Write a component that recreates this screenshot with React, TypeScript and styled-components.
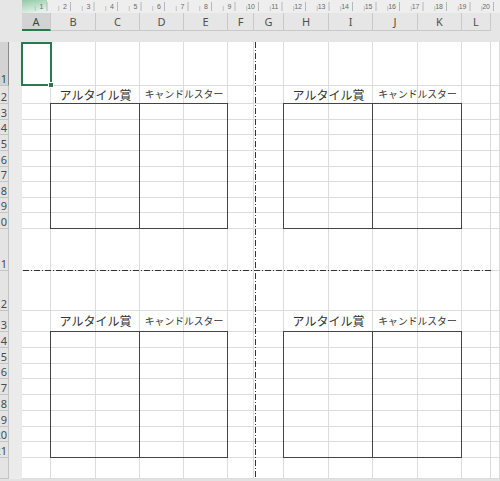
import React from "react";
import styled, { createGlobalStyle } from "styled-components";

const GlobalStyle = createGlobalStyle`
  html, body {
    margin: 0;
    padding: 0;
    overflow: hidden;
    background: #e6e6e6;
  }
`;

const COLS = [29, 45, 44, 44, 44, 26, 30, 45, 44, 45, 44, 29];
const LETTERS = "ABCDEFGHIJKL".split("");
const ROWS = [
  44, 18, ...Array(8).fill(15.625), 42, 40, 21, ...Array(8).fill(15.75), 21,
];

const GREEN = "#2b7a4f";
const GRID = "#dcdcdc";
const FONT = `"Noto Sans", "Noto Sans CJK JP", sans-serif`;

// grid offsets: 3 leading rows (ruler, headers, gap), 2 leading cols (row headers, strip)
const R0 = 3;
const C0 = 2;

const Window = styled.div`
  width: 500px;
  height: 481px;
  display: grid;
  grid-template-columns: 9px 13px ${COLS.map((w) => `${w}px`).join(" ")} 1fr;
  grid-template-rows: 13px 18px 11px ${ROWS.map((h) => `${h}px`).join(" ")} 1fr;
  background: #e6e6e6;
  font-family: ${FONT};
  overflow: hidden;
`;

const RulerWrap = styled.div`
  grid-row: 1;
  grid-column: 3 / -1;
  background: #eeeeee;
  overflow: hidden;

  svg {
    display: block;
  }
`;

const ColHead = styled.div<{ $c: number; $sel?: boolean }>`
  grid-row: 2;
  grid-column: ${(p) => p.$c + C0};
  display: flex;
  align-items: center;
  justify-content: center;
  font-size: 11px;
  color: ${(p) => (p.$sel ? "#2f4f3c" : "#505050")};
  background: ${(p) => (p.$sel ? "#d3d3d3" : "#e6e6e6")};
  border-right: 1px solid #c9c9c9;
  border-bottom: ${(p) => (p.$sel ? `2px solid ${GREEN}` : "1px solid #c9c9c9")};
  box-sizing: border-box;
`;

const RowHead = styled.div<{ $r: number; $sel?: boolean }>`
  grid-row: ${(p) => p.$r + R0};
  grid-column: 1;
  display: flex;
  align-items: flex-end;
  justify-content: flex-end;
  padding-right: 1px;
  font-size: 11px;
  line-height: 13px;
  white-space: nowrap;
  color: ${(p) => (p.$sel ? "#2f4f3c" : "#4a4a4a")};
  background: ${(p) => (p.$sel ? "#d3d3d3" : "#e4e4e4")};
  border-right: 1px solid ${(p) => (p.$sel ? "#8a8a8a" : "#c4c4c4")};
  border-bottom: 1px solid #c4c4c4;
  box-sizing: border-box;
`;

const Strip = styled.div`
  grid-row: ${R0 + 1} / -1;
  grid-column: 2;
  background: #ebebeb;
`;

const Cell = styled.div<{ $r: number; $c: number }>`
  grid-row: ${(p) => p.$r + R0};
  grid-column: ${(p) => p.$c + C0};
  background: #ffffff;
  border-right: 1px solid ${GRID};
  border-bottom: 1px solid ${GRID};
  box-sizing: border-box;
`;

const BottomBar = styled.div`
  grid-row: -2;
  grid-column: 1 / -1;
  background: #e2e2e2;
`;

const Box = styled.div<{ $r: number; $c: number }>`
  grid-row: ${(p) => p.$r + R0} / span 8;
  grid-column: ${(p) => p.$c + C0} / span 2;
  margin: -1px 0 0 -1px;
  border: 1px solid #444444;
  box-sizing: border-box;
`;

const Label = styled.div<{ $r: number; $c: number; $small?: boolean }>`
  grid-row: ${(p) => p.$r + R0};
  grid-column: ${(p) => p.$c + C0} / span 2;
  display: flex;
  align-items: center;
  justify-content: center;
  font-family: "Noto Sans CJK JP", sans-serif;
  font-size: ${(p) => (p.$small ? "9.8px" : "12px")};
  color: #333333;
  white-space: nowrap;
  padding-bottom: 2px;
`;

const HDash = styled.div<{ $r: number }>`
  grid-row: ${(p) => p.$r + R0};
  grid-column: ${1 + C0} / ${13 + C0};
  align-self: end;
  height: 1px;
  margin-left: 1px;
  background: repeating-linear-gradient(
    to right,
    #333 0 6px,
    transparent 6px 8px,
    #333 8px 9px,
    transparent 9px 11px
  );
`;

const VDash = styled.div<{ $c: number }>`
  grid-row: ${1 + R0} / -2;
  grid-column: ${(p) => p.$c + C0};
  justify-self: start;
  width: 1px;
  margin-left: 1px;
  background: repeating-linear-gradient(
    to bottom,
    #333 0 6px,
    transparent 6px 8px,
    #333 8px 9px,
    transparent 9px 11px
  );
`;

const Selection = styled.div`
  grid-row: ${1 + R0};
  grid-column: ${1 + C0};
  margin: 0 -1px 0 -1px;
  border: 2px solid ${GREEN};
  box-sizing: border-box;
  position: relative;

  &::after {
    content: "";
    position: absolute;
    right: -4px;
    bottom: -4px;
    width: 4px;
    height: 4px;
    background: ${GREEN};
    border: 1px solid #ffffff;
  }
`;

const Ruler = () => {
  const step = 23.5;
  const nums = Array.from({ length: 20 }, (_, i) => i + 1);
  return (
    <svg width={478} height={13} viewBox="0 0 478 13">
      <defs>
        <linearGradient id="sel" x1="0" y1="0" x2="0.4" y2="1">
          <stop offset="0" stopColor="#8fc9a4" />
          <stop offset="1" stopColor="#e3f1e8" />
        </linearGradient>
      </defs>
      <rect x={0} y={0} width={25} height={13} fill="url(#sel)" />
      {nums.map((n) => {
        const x = n * step;
        return (
          <g key={n}>
            <text
              x={x - 2}
              y={9}
              fontSize={7}
              fill="#6a6a6a"
              textAnchor="end"
              fontFamily="Liberation Sans, sans-serif"
            >
              {n}
            </text>
            <line x1={x + 1.5} y1={2} x2={x + 1.5} y2={11} stroke="#a8a8a8" strokeWidth={0.8} />
            <line
              x1={x - step / 2 + 1.5}
              y1={6}
              x2={x - step / 2 + 1.5}
              y2={11}
              stroke="#b8b8b8"
              strokeWidth={0.8}
            />
          </g>
        );
      })}
    </svg>
  );
};

const groups = [
  { r: 2, c: 2 },
  { r: 2, c: 8 },
  { r: 13, c: 2 },
  { r: 13, c: 8 },
];

export default function App() {
  const rowNums = ROWS.map((_, i) => i + 1);
  const colNums = Array.from({ length: 13 }, (_, i) => i + 1);

  return (
    <>
      <GlobalStyle />
      <Window>
        <RulerWrap>
          <Ruler />
        </RulerWrap>

        {LETTERS.map((l, i) => (
          <ColHead key={l} $c={i + 1} $sel={i === 0}>
            {l}
          </ColHead>
        ))}

        {rowNums.map((r) => (
          <RowHead key={r} $r={r} $sel={r === 1}>
            {r < 22 ? r : ""}
          </RowHead>
        ))}
        <Strip />

        {rowNums.map((r) =>
          colNums.map((c) => <Cell key={`${r}-${c}`} $r={r} $c={c} />)
        )}

        {groups.map((g) => (
          <React.Fragment key={`${g.r}-${g.c}`}>
            <Label $r={g.r} $c={g.c}>
              アルタイル賞
            </Label>
            <Label $r={g.r} $c={g.c + 2} $small>
              キャンドルスター
            </Label>
            <Box $r={g.r + 1} $c={g.c} />
            <Box $r={g.r + 1} $c={g.c + 2} />
          </React.Fragment>
        ))}

        <HDash $r={11} />
        <VDash $c={7} />
        <Selection />
        <BottomBar />
      </Window>
    </>
  );
}
